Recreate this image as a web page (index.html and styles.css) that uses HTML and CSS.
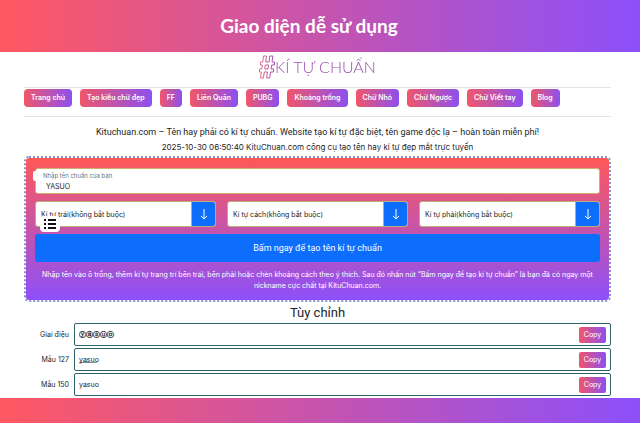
FILE: index.html
```html
<!DOCTYPE html>
<html lang="vi">

<head>
  <meta charset="UTF-8" />
  <meta name="viewport" content="width=device-width, initial-scale=1.0" />
  <title>Kí Tự Chuẩn</title>
  <link rel="stylesheet" href="styles.css">
</head>

<body>
  <header class="banner">
    <h1 class="banner-title">Giao diện dễ sử dụng</h1>
  </header>

  <main class="page">
    <a class="logo" href="#">
      <svg class="logo-hash" viewBox="0 0 16 24" aria-hidden="true">
        <defs>
          <linearGradient id="hash" x1="0" y1="0" x2="1" y2="0">
            <stop offset="0" stop-color="#e8707c" />
            <stop offset="1" stop-color="#a04cb4" />
          </linearGradient>
        </defs>
        <path fill="none" stroke="url(#hash)" stroke-width="1" d="M4.500 1H7.500L6.700 7H10L10.800 1H13.800L13 7H15.500V10H12.600L12 14H14.500V17H11.500L10.600 23H7.600L8.500 17H5.300L4.400 23H1.500L2.300 17H.5V14H2.700L3.300 10H1.500V7H3.700ZM6.300 10L5.700 14H9L9.600 10Z" />
      </svg>
      <span class="logo-text">KÍ TỰ CHUẨN</span>
    </a>

    <nav class="menu">
      <a href="#">Trang chủ</a>
      <a href="#">Tạo kiểu chữ đẹp</a>
      <a href="#">FF</a>
      <a href="#">Liên Quân</a>
      <a href="#">PUBG</a>
      <a href="#">Khoảng trống</a>
      <a href="#">Chữ Nhỏ</a>
      <a href="#">Chữ Ngược</a>
      <a href="#">Chữ Viết tay</a>
      <a href="#">Blog</a>
    </nav>

    <p class="intro">Kituchuan.com – Tên hay phải có kí tự chuẩn. Website tạo kí tự đặc biệt, tên game độc lạ – hoàn toàn miễn phí!</p>
    <p class="sub">2025-10-30 06:50:40 KituChuan.com công cụ tạo tên hay kí tự đẹp mắt trực tuyến</p>

    <form class="panel" onsubmit="return false">
      <div class="name-box">
        <label for="name">Nhập tên chuẩn của bạn</label>
        <input type="text" id="name" value="YASUO" />
      </div>

      <div class="parts">
        <div class="part">
          <input type="text" aria-label="Kí tự trái" placeholder="Kí tự trái(không bắt buộc)" />
          <button type="button" aria-label="Chọn kí tự trái">
            <svg viewBox="0 0 12 12"><path d="M6 1V11M3 8L6 11L9 8" /></svg>
          </button>
          <!-- nút mục lục nổi -->
          <button type="button" class="toc" aria-label="Mục lục">
            <svg viewBox="0 0 12 12"><path d="M4 2H12M4 6H12M4 10H12M0 2H2M0 6H2M0 10H2" /></svg>
          </button>
        </div>
        <div class="part">
          <input type="text" aria-label="Kí tự cách" placeholder="Kí tự cách(không bắt buộc)" />
          <button type="button" aria-label="Chọn kí tự cách">
            <svg viewBox="0 0 12 12"><path d="M6 1V11M3 8L6 11L9 8" /></svg>
          </button>
        </div>
        <div class="part">
          <input type="text" aria-label="Kí tự phải" placeholder="Kí tự phải(không bắt buộc)" />
          <button type="button" aria-label="Chọn kí tự phải">
            <svg viewBox="0 0 12 12"><path d="M6 1V11M3 8L6 11L9 8" /></svg>
          </button>
        </div>
      </div>

      <button type="submit" class="create">Bấm ngay để tạo tên kí tự chuẩn</button>
      <p class="help">Nhập tên vào ô trống, thêm kí tự trang trí bên trái, bên phải hoặc chèn khoảng cách theo ý thích. Sau đó nhấn nút “Bấm ngay để tạo kí tự chuẩn” là bạn đã có ngay một nickname cực chất tại KituChuan.com.</p>
    </form>

    <h2 class="heading">Tùy chỉnh</h2>

    <div class="results">
      <div class="row">
        <label for="r1">Giai điệu</label>
        <div class="result">
          <input type="text" id="r1" class="circled" value="ⓨⓐⓢⓤⓞ" readonly />
          <button type="button">Copy</button>
        </div>
      </div>
      <div class="row">
        <label for="r2">Mẫu 127</label>
        <div class="result">
          <input type="text" id="r2" value="y͟a͟s͟u͟o͟" readonly />
          <button type="button">Copy</button>
        </div>
      </div>
      <div class="row">
        <label for="r3">Mẫu 150</label>
        <div class="result">
          <input type="text" id="r3" value="yasuo" readonly />
          <button type="button">Copy</button>
        </div>
      </div>
    </div>
  </main>

  <footer class="bottom"></footer>
</body>

</html>
```
FILE: styles.css
```css
* {
  box-sizing: border-box;
}

body {
  margin: 0;
  min-height: 100vh;
  display: flex;
  flex-direction: column;
  font-family: Inter, "DejaVu Sans", sans-serif;
  font-size: 7px;
  color: #212529;
  background: #fff;
}

input,
button {
  font: inherit;
  color: inherit;
  margin: 0;
  padding: 0;
  border: 0;
}

p,
h1,
h2 {
  margin: 0;
}

.banner,
.bottom {
  background: linear-gradient(90deg, #ff5862, #8c50fa);
}

.banner {
  height: 52px;
  display: flex;
  align-items: center;
  justify-content: center;
}

.banner-title {
  font-family: Lato, sans-serif;
  font-size: 19px;
  font-weight: 700;
  line-height: 24px;
  color: #fff;
  padding-right: 22px;
}

.page {
  padding: 3px 29px 2px 24px;
}

.logo {
  display: flex;
  align-items: center;
  justify-content: center;
  height: 24px;
  text-decoration: none;
}

.logo-hash {
  width: 16px;
  height: 24px;
}

.logo-text {
  font-family: Lato, sans-serif;
  font-size: 16px;
  font-weight: 300;
  line-height: 24px;
  color: transparent;
  background: linear-gradient(90deg, #a04cb4, #8a3f9c);
  -webkit-background-clip: text;
  background-clip: text;
}

.menu {
  display: flex;
  gap: 8px;
  margin-top: 8px;
  padding: 1px 0 9px;
  border-top: 1px solid #e4e4e6;
  border-bottom: 1px solid #e4e4e6;
}

.menu a {
  padding: 0 7px;
  border-radius: 4px;
  font-weight: 600;
  line-height: 18px;
  color: #fff;
  white-space: nowrap;
  text-decoration: none;
  background: linear-gradient(90deg, #f0566a, #8c50f0);
}

.intro,
.sub {
  text-align: center;
}

.intro {
  margin-top: 7px;
  font-family: Roboto, sans-serif;
  font-size: 9px;
  line-height: 16px;
}

.sub {
  font-size: 8px;
  line-height: 14px;
}

.panel {
  margin-top: 2px;
  padding: 10px 9px 9px;
  border: 2px dotted #8c90cc;
  border-radius: 5px;
  background: linear-gradient(#ff5858, #8c50fa) padding-box;
}

.name-box {
  position: relative;
  display: flex;
  flex-direction: column;
  padding: 2px 7px;
  border: 1px solid #d0b070;
  border-radius: 3px;
  background: #fff;
}

/* white tab sticking out on the left */
.name-box::before {
  content: "";
  position: absolute;
  left: -3px;
  top: 2px;
  width: 4px;
  height: 10px;
  border-radius: 2px 0 0 2px;
  background: #fff;
}

.name-box label {
  font-size: 6px;
  line-height: 10px;
  color: #6c757d;
}

.name-box input {
  height: 10px;
  padding-left: 3px;
  background: none;
}

.parts {
  display: grid;
  grid-template-columns: repeat(3, 1fr);
  gap: 11px;
  margin-top: 7px;
}

.part {
  position: relative;
  display: flex;
  height: 26px;
  border: 1px solid #b8b078;
  border-radius: 3px;
  background: #fff;
}

.part input {
  flex: 1;
  min-width: 0;
  padding-left: 5px;
  background: none;
}

.part input::placeholder {
  color: #212529;
  opacity: 1;
}

.part button {
  display: flex;
  align-items: center;
  justify-content: center;
  width: 24px;
  border-left: 1px solid #b8b078;
  border-radius: 0 2px 2px 0;
  background: #0d6efd;
}

.part svg {
  width: 12px;
  height: 12px;
  fill: none;
  stroke: #fff;
  stroke-width: 1;
}

.part .toc {
  position: absolute;
  left: 4px;
  top: 14px;
  width: 20px;
  height: 16px;
  border: 0;
  border-radius: 4px;
  background: #fff;
}

.part .toc svg {
  stroke: #111;
  stroke-width: 2;
}

.create {
  display: block;
  width: 100%;
  margin-top: 7px;
  border-radius: 3px;
  font-family: Roboto, sans-serif;
  font-size: 9px;
  line-height: 28px;
  color: #fff;
  background: #0d6efd;
}

.help {
  margin-top: 7px;
  padding: 0 4px;
  line-height: 11px;
  text-align: center;
  color: #fff;
}

.heading {
  font-family: Roboto, sans-serif;
  font-size: 13px;
  font-weight: 400;
  line-height: 21px;
  text-align: center;
}

.results {
  display: grid;
  gap: 2px;
}

.row {
  display: flex;
  align-items: center;
}

.row label {
  width: 50px;
  padding-right: 5px;
  text-align: right;
}

.result {
  flex: 1;
  display: flex;
  align-items: center;
  height: 23px;
  padding: 0 4px;
  border: 1px solid #2f6268;
  border-radius: 2px;
}

.result input {
  flex: 1;
  min-width: 0;
  height: 18px;
  background: none;
}

.result .circled {
  font-family: "DejaVu Sans", sans-serif;
  font-weight: 700;
}

.result button {
  width: 27px;
  border-radius: 2px;
  line-height: 16px;
  color: #fff;
  background: linear-gradient(90deg, #f0566a, #8c50f0);
}

.bottom {
  flex: 1;
  min-height: 25px;
}
```
